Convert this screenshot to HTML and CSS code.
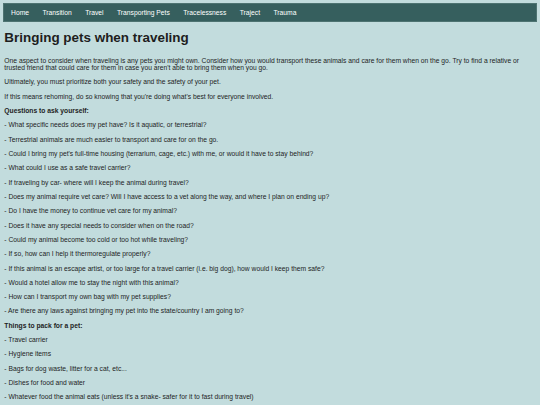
FILE: index.html
```html
<!DOCTYPE html>
<html lang="en">
<head>
<meta charset="utf-8">
<title>Bringing pets when traveling</title>
<link rel="stylesheet" href="styles.css">
</head>
<body>
<nav class="topnav">
  <a href="#">Home</a>
  <a href="#">Transition</a>
  <a href="#">Travel</a>
  <a href="#">Transporting Pets</a>
  <a href="#">Tracelessness</a>
  <a href="#">Traject</a>
  <a href="#">Trauma</a>
</nav>
<main class="content">
  <h1 class="title">Bringing pets when traveling</h1>
  <p>One aspect to consider when traveling is any pets you might own. Consider how you would transport these animals and care for them when on the go. Try to find a relative or trusted friend that could care for them in case you aren't able to bring them when you go.</p>
  <p>Ultimately, you must prioritize both your safety and the safety of your pet.</p>
  <p>If this means rehoming, do so knowing that you're doing what's best for everyone involved.</p>
  <p class="sub">Questions to ask yourself:</p>
  <p>- What specific needs does my pet have? Is it aquatic, or terrestrial?</p>
  <p>- Terrestrial animals are much easier to transport and care for on the go.</p>
  <p>- Could I bring my pet's full-time housing (terrarium, cage, etc.) with me, or would it have to stay behind?</p>
  <p>- What could I use as a safe travel carrier?</p>
  <p>- If traveling by car- where will I keep the animal during travel?</p>
  <p>- Does my animal require vet care? Will I have access to a vet along the way, and where I plan on ending up?</p>
  <p>- Do I have the money to continue vet care for my animal?</p>
  <p>- Does it have any special needs to consider when on the road?</p>
  <p>- Could my animal become too cold or too hot while traveling?</p>
  <p>- If so, how can I help it thermoregulate properly?</p>
  <p>- If this animal is an escape artist, or too large for a travel carrier (i.e. big dog), how would I keep them safe?</p>
  <p>- Would a hotel allow me to stay the night with this animal?</p>
  <p>- How can I transport my own bag with my pet supplies?</p>
  <p>- Are there any laws against bringing my pet into the state/country I am going to?</p>
  <p class="sub">Things to pack for a pet:</p>
  <p>- Travel carrier</p>
  <p>- Hygiene items</p>
  <p>- Bags for dog waste, litter for a cat, etc...</p>
  <p>- Dishes for food and water</p>
  <p>- Whatever food the animal eats (unless it's a snake- safer for it to fast during travel)</p>
</main>
</body>
</html>
```

FILE: styles.css
```css
html {
  background: #c2dcdd;
}
body {
  margin: 3.36px;
  font-family: "Liberation Sans", Arial, sans-serif;
  font-size: 6.72px;
  line-height: 7.6px;
  color: #1e1e1e;
  background: #c2dcdd;
}
.topnav {
  display: flex;
  background: #365f5e;
  border: 1px solid #4d7371;
  height: 17px;
  align-items: center;
}
.topnav a {
  color: #ffffff;
  text-decoration: none;
  padding: 0 6.72px;
}
.content {
  padding: 0 1px;
}
.title {
  font-size: 13.44px;
  line-height: 15.5px;
  margin: 7.3px 0 11.4px;
}
.content p {
  margin: 6.72px 0;
}
.content p.sub {
  font-weight: bold;
}
```
